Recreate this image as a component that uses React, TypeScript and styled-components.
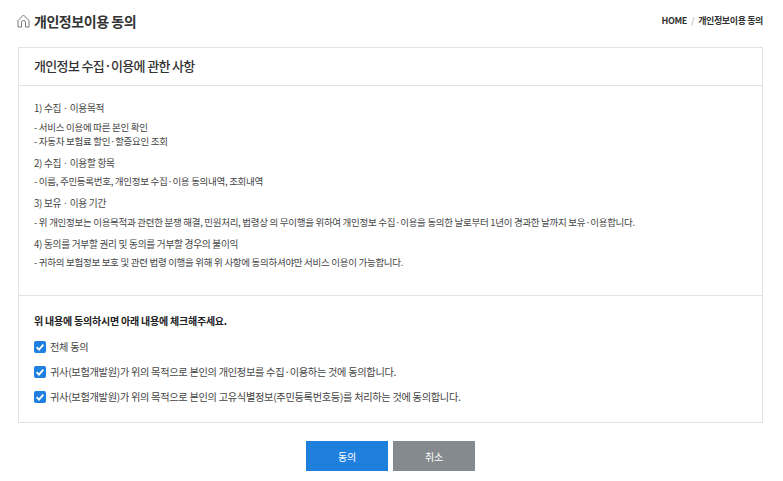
import React from "react";
import styled, { createGlobalStyle } from "styled-components";

const Global = createGlobalStyle`
  html, body { margin: 0; padding: 0; background: #fff; }
  body { font-family: "Noto Sans CJK KR", "Noto Sans", sans-serif; color: #333; }
`;
const Page = styled.div`
  width: 783px; height: 481px; overflow: hidden; box-sizing: border-box;
  padding: 0 20px 0 18px;
`;
const Header = styled.header`
  height: 47px; display: flex; align-items: center; justify-content: space-between;
  padding-bottom: 6px; box-sizing: border-box;
`;
const TitleWrap = styled.div`display: flex; align-items: center; gap: 4px; margin-left: -1px;`;
const Title = styled.h1`
  margin: 0; font-size: 14px; font-weight: 700; color: #333; letter-spacing: -0.45px; line-height: 20px;
`;
const Crumbs = styled.div`
  font-size: 9px; font-weight: 700; color: #333; letter-spacing: -0.38px; display: flex; gap: 4px; align-items: center;
`;
const Slash = styled.span`color: #aaa; font-weight: 400;`;
const Card = styled.section`
  border: 1px solid #e2e2e2; box-sizing: border-box; height: 376px;
`;
const CardHead = styled.div`
  height: 38px; box-sizing: border-box; border-bottom: 1px solid #e2e2e2;
  display: flex; align-items: center; padding: 0 0 2px 15px;
`;
const CardTitle = styled.h2`
  margin: 0; font-size: 13px; font-weight: 500; color: #333; letter-spacing: -0.65px;
`;
const Terms = styled.div`
  height: 210px; box-sizing: border-box; border-bottom: 1px solid #e2e2e2; padding: 15px 0 0 15px;
`;
const Block = styled.div`margin-bottom: 8px;`;
const Line = styled.p<{ $head?: boolean }>`
  margin: 0 0 ${p => (p.$head ? "4.6px" : "0")}; font-size: ${p => (p.$head ? "9.7px" : "9.5px")};
  line-height: 14px; letter-spacing: -0.29px;
  color: #444; white-space: nowrap;
`;
const Consent = styled.div`padding: 17px 0 0 15px;`;
const ConsentHead = styled.p`
  margin: 0 0 5px; font-size: 10px; line-height: 16px; font-weight: 700; color: #222; letter-spacing: -0.22px;
`;
const CheckRow = styled.label`
  display: flex; align-items: center; gap: 4px; height: 25px;
  font-size: 10.2px; color: #444; letter-spacing: -0.29px; white-space: nowrap;
`;
const Box = styled.span`
  width: 12px; height: 12px; border-radius: 2px; background: #1e7fe0; display: flex;
  align-items: center; justify-content: center; flex: none;
`;
const Buttons = styled.div`
  display: flex; justify-content: center; gap: 5px; margin-top: 18px; padding-left: 0;
`;
const Btn = styled.button<{ $primary?: boolean }>`
  width: 82px; height: 30px; border: 0; padding: 0; color: #fff; font-family: inherit;
  font-size: 10px; letter-spacing: -0.2px;
  background: ${p => (p.$primary ? "#1f7fdd" : "#858a8f")};
`;

const Check = () => (
  <Box>
    <svg width="10" height="10" viewBox="0 0 10 10" fill="none">
      <path d="M1.6 5.2 4 7.6 8.4 2.6" stroke="#fff" strokeWidth="1.9" />
    </svg>
  </Box>
);

const blocks = [
  ["1) 수집\u2009·\u2009이용목적", "- 서비스 이용에 따른 본인 확인", "- 자동차 보험료 할인·할증요인 조회"],
  ["2) 수집\u2009·\u2009이용할 항목", "- 이름, 주민등록번호, 개인정보 수집·이용 동의내역, 조회내역"],
  ["3) 보유\u2009·\u2009이용 기간", "- 위 개인정보는 이용목적과 관련한 분쟁 해결, 민원처리, 법령상 의 무이행을 위하여 개인정보 수집·이용을 동의한 날로부터 1년이 경과한 날까지 보유·이용합니다."],
  ["4) 동의를 거부할 권리 및 동의를 거부할 경우의 불이익", "- 귀하의 보험정보 보호 및 관련 법령 이행을 위해 위 사항에 동의하셔야만 서비스 이용이 가능합니다."],
];
const checks = [
  "전체 동의",
  "귀사(보험개발원)가 위의 목적으로 본인의 개인정보를 수집·이용하는 것에 동의합니다.",
  "귀사(보험개발원)가 위의 목적으로 본인의 고유식별정보(주민등록번호등)를 처리하는 것에 동의합니다.",
];

export default function App() {
  return (
    <Page>
      <Global />
      <Header>
        <TitleWrap>
          <svg width="13" height="14" viewBox="0 0 13 14" fill="none" stroke="#777" strokeWidth="1">
            <path d="M1 6.5 6.5 1 12 6.5V13H8.5V8.5a2 2 0 0 0-4 0V13H1Z" />
          </svg>
          <Title>개인정보이용 동의</Title>
        </TitleWrap>
        <Crumbs>
          <span>HOME</span><Slash>/</Slash><span>개인정보이용 동의</span>
        </Crumbs>
      </Header>
      <Card>
        <CardHead><CardTitle>개인정보 수집·이용에 관한 사항</CardTitle></CardHead>
        <Terms>
          {blocks.map(b => (
            <Block key={b[0]}>
              {b.map((l, i) => <Line key={l} $head={i === 0}>{l}</Line>)}
            </Block>
          ))}
        </Terms>
        <Consent>
          <ConsentHead>위 내용에 동의하시면 아래 내용에 체크해주세요.</ConsentHead>
          {checks.map(c => <CheckRow key={c}><Check />{c}</CheckRow>)}
        </Consent>
      </Card>
      <Buttons>
        <Btn $primary>동의</Btn>
        <Btn>취소</Btn>
      </Buttons>
    </Page>
  );
}
